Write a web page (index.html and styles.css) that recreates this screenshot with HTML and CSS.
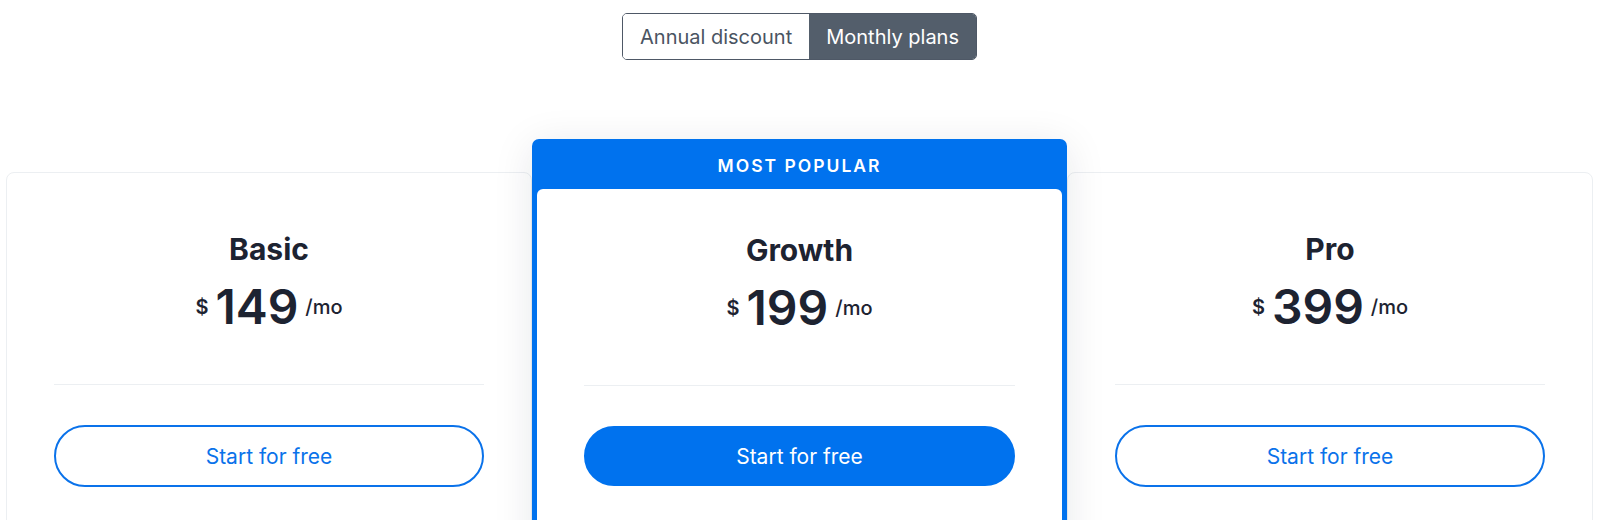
FILE: index.html
```html
<!DOCTYPE html>
<html lang="en">
<head>
    <meta charset="UTF-8">
    <meta name="viewport" content="width=device-width, initial-scale=1.0">
    <title>Pricing</title>
    <link rel="stylesheet" href="styles.css">
</head>
<body>

<div class="toggle">
    <button class="toggle-btn">Annual discount</button>
    <button class="toggle-btn active">Monthly plans</button>
</div>

<div class="plans">
    <div class="plan">
        <h3 class="plan-name">Basic</h3>
        <div class="price"><span class="cur">$</span><span class="amount">149</span><span class="per">/mo</span></div>
        <hr class="divider">
        <button class="cta">Start for free</button>
    </div>

    <div class="plan-popular">
        <div class="badge">MOST POPULAR</div>
        <div class="plan-body">
            <h3 class="plan-name">Growth</h3>
            <div class="price"><span class="cur">$</span><span class="amount">199</span><span class="per">/mo</span></div>
            <hr class="divider">
            <button class="cta filled">Start for free</button>
        </div>
    </div>

    <div class="plan">
        <h3 class="plan-name">Pro</h3>
        <div class="price"><span class="cur">$</span><span class="amount">399</span><span class="per">/mo</span></div>
        <hr class="divider">
        <button class="cta">Start for free</button>
    </div>
</div>

</body>
</html>
```

FILE: styles.css
```css
body {
    font-family: Inter, "Noto Sans", sans-serif;
    background-color: #ffffff;
    color: #1d2331;
    margin: 0;
    padding: 13px 7px 0 6px;
    overflow: hidden;
}
.toggle {
    display: flex;
    width: max-content;
    margin: 0 auto;
    border: 1px solid #4e5866;
    border-radius: 5px;
    overflow: hidden;
}
.toggle-btn {
    font-family: inherit;
    font-size: 20px;
    height: 45px;
    padding: 0 17px;
    border: none;
    background: #ffffff;
    color: #4a5462;
    cursor: pointer;
}
.toggle-btn.active {
    background-color: #535e6b;
    color: #ffffff;
}
.plans {
    display: grid;
    grid-template-columns: 1fr 535px 1fr;
    align-items: start;
    margin-top: 79px;
}
.plan {
    margin-top: 33px;
    border: 1px solid #eceff2;
    border-radius: 8px;
    background: #ffffff;
    padding: 58px 47px 80px;
    text-align: center;
}
.plan-popular {
    position: relative;
    z-index: 1;
    background-color: #0072ee;
    border-radius: 7px;
    padding: 0 5px 5px;
    box-shadow: 0 6px 40px rgba(20, 30, 50, 0.1);
}
.badge {
    height: 50px;
    line-height: 54px;
    text-align: center;
    color: #ffffff;
    font-size: 17.5px;
    font-weight: 600;
    letter-spacing: 2px;
}
.plan-body {
    background: #ffffff;
    border-radius: 6px;
    padding: 43px 47px 80px;
    text-align: center;
}
.plan-name {
    margin: 0;
    font-size: 30px;
    line-height: 36px;
    font-weight: 700;
}
.price {
    display: flex;
    justify-content: center;
    align-items: center;
    gap: 7px;
    margin-top: 16px;
}
.cur {
    font-size: 20px;
    line-height: 20px;
    font-weight: 600;
}
.amount {
    font-size: 48px;
    line-height: 48px;
    font-weight: 600;
}
.per {
    font-size: 20px;
    line-height: 20px;
    font-weight: 500;
}
.divider {
    border: none;
    border-top: 1px solid #eceff2;
    margin: 53px 0 40px;
}
.cta {
    display: block;
    width: 100%;
    height: 62px;
    border: 2px solid #0a72ea;
    border-radius: 31px;
    background: #ffffff;
    color: #0a72ea;
    font-family: inherit;
    font-size: 21px;
    cursor: pointer;
}
.cta.filled {
    height: 60px;
    background-color: #0072ee;
    border-color: #0072ee;
    color: #ffffff;
}
```
